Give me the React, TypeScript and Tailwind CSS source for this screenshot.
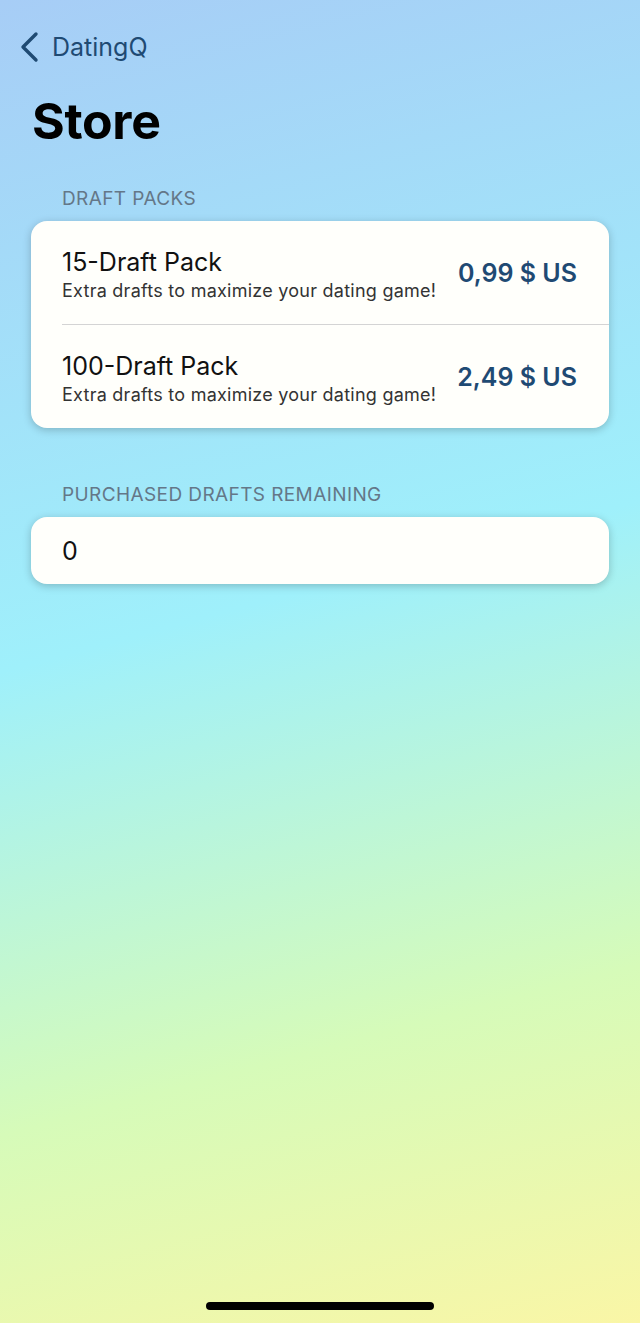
const packs = [
  { title: "15-Draft Pack", subtitle: "Extra drafts to maximize your dating game!", price: "0,99 $ US" },
  { title: "100-Draft Pack", subtitle: "Extra drafts to maximize your dating game!", price: "2,49 $ US" },
];

function BackChevron() {
  return (
    <svg width="20" height="32" viewBox="0 0 20 32" fill="none" className="shrink-0">
      <polyline
        points="16,3 3,16 16,29"
        stroke="#1f4a73"
        strokeWidth="3.4"
        strokeLinecap="round"
        strokeLinejoin="round"
      />
    </svg>
  );
}

function SectionHeader({ children }: { children: React.ReactNode }) {
  return (
    <div className="px-[62px] text-[19px] leading-[24px] tracking-[0.4px] uppercase text-[#647788]">
      {children}
    </div>
  );
}

export default function App() {
  return (
    <div className="min-h-[1323px] w-full flex flex-col font-['Inter',sans-serif] bg-[linear-gradient(165deg,#a7cdf6_0%,#9ff0fb_45%,#d6fbb9_76%,#faf6a6_100%)]">
      <nav className="mt-[25px] h-[44px] flex items-center gap-[12px] pl-[20px]">
        <BackChevron />
        <span className="text-[25px] leading-[30px] text-[#1f4a73]">DatingQ</span>
      </nav>

      <h1 className="mt-[22px] px-[32px] text-[50px] leading-[60px] font-bold text-black tracking-[-0.3px]">
        Store
      </h1>

      <div className="mt-[36px]">
        <SectionHeader>Draft Packs</SectionHeader>
      </div>
      <div className="mx-[31px] mt-[10px] rounded-[16px] bg-[#fffffb] shadow-[0_2px_8px_rgba(0,0,0,0.22)]">
        {packs.map((pack, i) => (
          <div key={pack.title}>
            {i > 0 && <div className="ml-[31px] border-t border-[#d4d4d4]" />}
            <div className="h-[103px] flex items-center justify-between pl-[31px] pr-[32px]">
              <div className="pt-[4px]">
                <div className="text-[25px] leading-[30px] text-[#111]">{pack.title}</div>
                <div className="mt-[2px] text-[18px] leading-[24px] tracking-[0.25px] text-[#333]">{pack.subtitle}</div>
              </div>
              <div className="text-[25px] leading-[30px] font-semibold text-[#1f4a73]">{pack.price}</div>
            </div>
          </div>
        ))}
      </div>

      <div className="mt-[55px]">
        <SectionHeader>Purchased Drafts Remaining</SectionHeader>
      </div>
      <div className="mx-[31px] mt-[10px] h-[67px] flex items-center px-[31px] rounded-[16px] bg-[#fffffb] shadow-[0_2px_8px_rgba(0,0,0,0.22)]">
        <span className="text-[25px] leading-[30px] text-[#111]">0</span>
      </div>

      <div className="mt-auto mb-[13px] mx-auto w-[228px] h-[8px] rounded-full bg-black" />
    </div>
  );
}
